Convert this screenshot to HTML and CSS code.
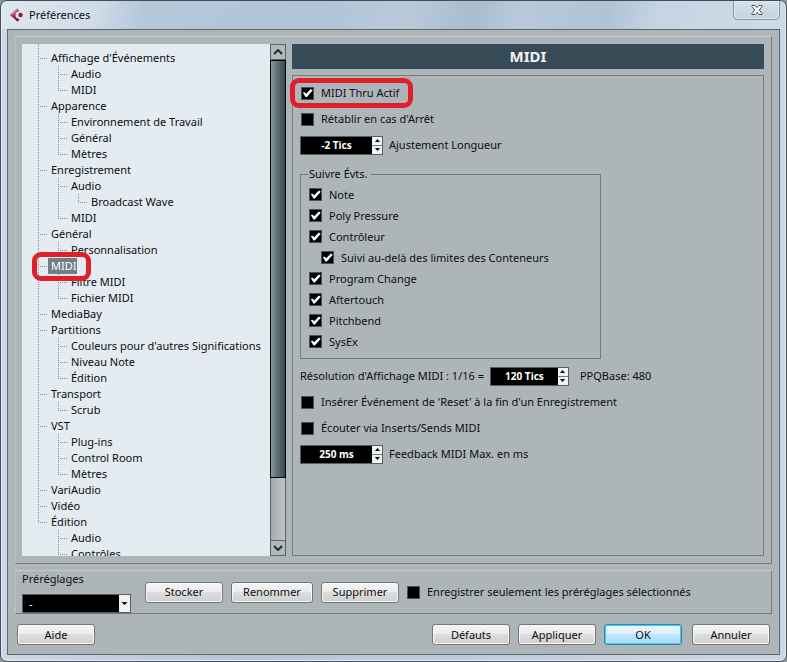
FILE: index.html
```html
<!DOCTYPE html>
<html lang="fr">
<head>
<meta charset="utf-8">
<title>Préférences</title>
<link rel="stylesheet" href="styles.css">
</head>
<body>
<div class="window">
  <header class="titlebar">
    <svg class="app-icon" viewBox="0 0 14 14" aria-hidden="true">
      <path d="M0 7 7 0.500 9.500 3C6 4 5.500 5.500 5.500 7S6 10 9.500 11.500L7.500 13.500Z" fill="#a03048"/>
      <path d="M0 7 7 0.500 8 1.500 3.500 6.500Z" fill="#c98a97"/>
      <path d="M3 8.500 9.500 11.500 7.500 13.500Z" fill="#7c1630"/>
      <circle cx="10.500" cy="7" r="2.200" fill="#8c1c36"/>
    </svg>
    <h1 class="title">Préférences</h1>
    <button class="close" type="button" aria-label="Fermer">
      <svg viewBox="0 0 12 10" aria-hidden="true"><path d="M1 .5h3.200L6 2.700 7.800.5H11v1L8.300 5 11 8.500v1H7.800L6 7.300 4.200 9.500H1v-1L3.700 5 1 1.500Z" fill="#fff" stroke="#4c5360"/></svg>
    </button>
  </header>

  <main class="client">
    <section class="panel prefs">
      <nav class="tree">
        <ul class="root">
          <li><span>Affichage d'Événements</span>
            <ul><li><span>Audio</span></li><li><span>MIDI</span></li></ul></li>
          <li><span>Apparence</span>
            <ul><li><span>Environnement de Travail</span></li><li><span>Général</span></li><li><span>Mètres</span></li></ul></li>
          <li><span>Enregistrement</span>
            <ul><li><span>Audio</span><ul><li><span>Broadcast Wave</span></li></ul></li><li><span>MIDI</span></li></ul></li>
          <li><span>Général</span>
            <ul><li><span>Personnalisation</span></li></ul></li>
          <li><span class="selected">MIDI</span>
            <ul><li><span>Filtre MIDI</span></li><li><span>Fichier MIDI</span></li></ul></li>
          <li><span>MediaBay</span></li>
          <li><span>Partitions</span>
            <ul><li><span>Couleurs pour d'autres Significations</span></li><li><span>Niveau Note</span></li><li><span>Édition</span></li></ul></li>
          <li><span>Transport</span>
            <ul><li><span>Scrub</span></li></ul></li>
          <li><span>VST</span>
            <ul><li><span>Plug-ins</span></li><li><span>Control Room</span></li><li><span>Mètres</span></li></ul></li>
          <li><span>VariAudio</span></li>
          <li><span>Vidéo</span></li>
          <li><span>Édition</span>
            <ul><li><span>Audio</span></li><li><span>Contrôles</span></li></ul></li>
        </ul>
      </nav>

      <div class="scrollbar">
        <button type="button" aria-label="Défiler vers le haut"><svg viewBox="0 0 10 6" aria-hidden="true"><path d="M1 5 5 1l4 4"/></svg></button>
        <div class="track"><div class="thumb"></div></div>
        <button type="button" aria-label="Défiler vers le bas"><svg viewBox="0 0 10 6" aria-hidden="true"><path d="M1 1l4 4 4-4"/></svg></button>
      </div>

      <div class="page">
        <h2>MIDI</h2>
        <form class="options">
          <div class="row"><label class="check ringed"><input type="checkbox" checked>MIDI Thru Actif</label></div>
          <div class="row"><label class="check"><input type="checkbox">Rétablir en cas d'Arrêt</label></div>
          <div class="row">
            <div class="spin">
              <input id="length" type="text" value="-2 Tics">
              <button type="button" aria-label="Augmenter"><svg viewBox="0 0 5 3" aria-hidden="true"><path d="M0 3 2.500 0 5 3Z"/></svg></button>
              <button type="button" aria-label="Diminuer"><svg viewBox="0 0 5 3" aria-hidden="true"><path d="M0 0h5L2.500 3Z"/></svg></button>
            </div>
            <label for="length">Ajustement Longueur</label>
          </div>

          <fieldset>
            <legend>Suivre Évts.</legend>
            <label class="check"><input type="checkbox" checked>Note</label>
            <label class="check"><input type="checkbox" checked>Poly Pressure</label>
            <label class="check"><input type="checkbox" checked>Contrôleur</label>
            <label class="check nested"><input type="checkbox" checked>Suivi au-delà des limites des Conteneurs</label>
            <label class="check"><input type="checkbox" checked>Program Change</label>
            <label class="check"><input type="checkbox" checked>Aftertouch</label>
            <label class="check"><input type="checkbox" checked>Pitchbend</label>
            <label class="check"><input type="checkbox" checked>SysEx</label>
          </fieldset>

          <div class="row">
            <label for="resolution">Résolution d'Affichage MIDI : 1/16 =</label>
            <div class="spin narrow">
              <input id="resolution" type="text" value="120 Tics">
              <button type="button" aria-label="Augmenter"><svg viewBox="0 0 5 3" aria-hidden="true"><path d="M0 3 2.500 0 5 3Z"/></svg></button>
              <button type="button" aria-label="Diminuer"><svg viewBox="0 0 5 3" aria-hidden="true"><path d="M0 0h5L2.500 3Z"/></svg></button>
            </div>
            <span class="base">PPQBase: 480</span>
          </div>
          <div class="row"><label class="check"><input type="checkbox">Insérer Événement de 'Reset' à la fin d'un Enregistrement</label></div>
          <div class="row"><label class="check"><input type="checkbox">Écouter via Inserts/Sends MIDI</label></div>
          <div class="row">
            <div class="spin">
              <input id="feedback" type="text" value="250 ms">
              <button type="button" aria-label="Augmenter"><svg viewBox="0 0 5 3" aria-hidden="true"><path d="M0 3 2.500 0 5 3Z"/></svg></button>
              <button type="button" aria-label="Diminuer"><svg viewBox="0 0 5 3" aria-hidden="true"><path d="M0 0h5L2.500 3Z"/></svg></button>
            </div>
            <label for="feedback">Feedback MIDI Max. en ms</label>
          </div>
        </form>
      </div>
    </section>

    <section class="panel presets">
      <div class="preset">
        <label for="preset">Préréglages</label>
        <div class="combo">
          <select id="preset"><option>-</option></select>
          <svg viewBox="0 0 11 17" aria-hidden="true"><path d="M0 0h11v17H0Z" fill="#f1f2f2"/><path d="M2.500 7h6l-3 3Z"/></svg>
        </div>
      </div>
      <div class="actions">
        <button class="btn" type="button">Stocker</button>
        <button class="btn wide" type="button">Renommer</button>
        <button class="btn" type="button">Supprimer</button>
        <label class="check"><input type="checkbox">Enregistrer seulement les préréglages sélectionnés</label>
      </div>
    </section>

    <footer class="buttons">
      <button class="btn help" type="button">Aide</button>
      <button class="btn" type="button">Défauts</button>
      <button class="btn" type="button">Appliquer</button>
      <button class="btn default" type="button">OK</button>
      <button class="btn" type="button">Annuler</button>
    </footer>
  </main>
</div>
</body>
</html>
```
FILE: styles.css
```css
* { box-sizing: border-box; }

body {
  margin: 0;
  background: #8d969c;
  color: #0c0e10;
  font: 11px/16px "Noto Sans", "Open Sans", sans-serif;
}

button, input, select { margin: 0; padding: 0; font: inherit; color: inherit; }
ul { margin: 0; padding: 0; list-style: none; }

.window {
  display: flex;
  flex-direction: column;
  height: 100vh;
  padding: 0 6px 6px;
  border: 1px solid #454d56;
  border-radius: 7px;
  background: linear-gradient(90deg, #cbd8e6, #b3c6da 30%, #bccddd 60%, #c9d8e6);
  box-shadow: inset 0 0 0 1px #e4edf5;
}

/* Title bar */
.titlebar {
  display: flex;
  flex: none;
  align-items: center;
  height: 28px;
  margin: 0 -5px;
  padding: 0 5px 0 8px;
  background: linear-gradient(100deg, #dce6ef 0, #d0dce8 12%, #b5c8da 18%, #b0c4d8 40%, #b9cad9 52%, #a9bdce 60%, #b8cad9 66%, #b0c3d4 77%, #c5d5e3 84%, #cedbe7);
  border-radius: 6px 6px 0 0;
}
.app-icon { width: 14px; height: 14px; margin-right: 5px; }
.title { margin: 0; font-size: 11px; font-weight: normal; }
.close {
  align-self: flex-start;
  width: 47px;
  height: 19px;
  margin-left: auto;
  border: 1px solid #8494a5;
  border-top: 0;
  border-radius: 0 0 5px 5px;
  background: linear-gradient(#d6e1ec, #c3d2e0);
  box-shadow: inset 0 0 0 1px #dfe9f1;
}
.close svg { display: block; width: 12px; height: 10px; margin: 0 auto; }

/* Client area */
.client {
  display: flex;
  flex: 1;
  flex-direction: column;
  min-height: 0;
  padding: 6px 7px;
  border: 1px solid #5d676f;
  background: #aeb5b8;
}
.panel {
  border: 1px solid;
  border-color: #c6ccce #747a7f #747a7f #bcc3c5;
}
.prefs {
  display: flex;
  flex: 1;
  min-height: 0;
  padding: 7px 7px 7px 6px;
}

/* Tree */
.tree {
  flex: 0 1 248px;
  overflow: hidden;
  padding-left: 16px;
  background: #e4ebf1;
  white-space: nowrap;
}
.tree li {
  padding-left: 10px;
  background:
    repeating-linear-gradient(#868c93 0 1px, transparent 1px 2px) 0 0 / 1px 100% no-repeat,
    repeating-linear-gradient(90deg, #868c93 0 1px, transparent 1px 2px) 0 8px / 9px 1px no-repeat;
}
.tree li:last-child { background-size: 1px 8px, 9px 1px; }
.tree .root > li:first-child { padding-top: 6px; background-position: 0 0, 0 14px; }
.tree li ul { margin-left: 10px; }
.tree span { display: block; width: max-content; padding: 0 1px 0 3px; }
.tree .selected { position: relative; background: #6e7f87; color: #fff; }

/* Highlight rings */
.selected::after, .ringed::after {
  content: "";
  position: absolute;
  z-index: 1;
  border: 5px solid #df1f2a;
  border-radius: 9px;
  pointer-events: none;
}
.selected::after { inset: -6px -14px -7px -16px; }
.ringed::after { inset: -7px -14px -7px -10px; }

/* Scrollbar */
.scrollbar {
  display: grid;
  flex: 0 0 16px;
  grid-template-rows: 16px 1fr 16px;
  margin-right: 6px;
}
.scrollbar button {
  display: grid;
  place-items: center;
  border: 1px solid #5b646a;
  background: #b2b9bc;
}
.scrollbar svg { width: 10px; height: 6px; fill: none; stroke: #222a30; stroke-width: 2; }
.track {
  border: solid #5b646a;
  border-width: 0 1px;
  background: linear-gradient(90deg, #a4abae, #c0c6c8);
}
.thumb {
  height: 87%;
  margin: 0 -1px;
  border: 1px solid #000;
  background: linear-gradient(90deg, #8b999f, #60727a 40%, #3b4b54);
}

/* Settings page */
.page { display: flex; flex: 1; flex-direction: column; min-width: 0; gap: 6px; }
.page h2 {
  margin: 0;
  background: #384c57;
  color: #f2f4f5;
  font-size: 15px;
  font-weight: bold;
  line-height: 25px;
  text-align: center;
}
.options {
  flex: 1;
  min-height: 0;
  padding: 4px 7px;
  border: 1px solid #747a7f;
  white-space: nowrap;
}
.row { display: flex; align-items: center; height: 26px; gap: 6px; }
.check { display: flex; position: relative; align-items: center; gap: 7px; }
.check input {
  flex: none;
  width: 13px;
  height: 13px;
  margin-left: 1px;
  appearance: none;
  border: 1px solid #4b5256;
  background: #000;
}
.check input:checked::before {
  content: "";
  display: block;
  width: 11px;
  height: 11px;
  background: #fff;
  clip-path: polygon(7% 46%, 25% 44%, 38% 56%, 80% 14%, 98% 24%, 44% 86%, 32% 86%);
}
fieldset {
  width: 66%;
  min-width: max-content;
  margin: 8px 0 4px;
  padding: 2px 7px 6px;
  border: 1px solid #747a7f;
}
legend { padding: 0 3px 0 1px; }
fieldset .check { height: 21px; }
fieldset .nested { margin-left: 12px; }

.spin {
  display: grid;
  grid-template: 1fr 1fr / 1fr 10px;
  width: 83px;
  height: 19px;
  border: 1px solid #596065;
  background: #000;
}
.spin input {
  grid-row: 1 / 3;
  width: 100%;
  min-width: 0;
  border: 0;
  background: #000;
  color: #fff;
  font-size: 10px;
  font-weight: bold;
  text-align: center;
}
.spin button { display: grid; place-items: center; border: 0; background: #f1f2f2; }
.spin button + button { border-top: 1px solid #747a7f; }
.spin svg { width: 5px; height: 3px; }
.spin.narrow { width: 79px; }
.base { margin-left: 5px; }

/* Presets */
.presets { display: flex; margin-top: 6px; padding: 0 6px; gap: 14px; }
.combo { position: relative; width: 109px; height: 19px; margin-top: 7px; }
.combo select {
  display: block;
  width: 100%;
  height: 100%;
  padding-left: 6px;
  appearance: none;
  border: 1px solid #596065;
  border-radius: 0;
  background: #000;
  color: #fff;
}
.combo svg { position: absolute; top: 1px; right: 1px; width: 11px; height: 17px; pointer-events: none; }
.actions { display: flex; align-items: center; gap: 8px; white-space: nowrap; }
.actions .check input { margin-left: 0; }

.btn {
  flex: none;
  width: 78px;
  height: 21px;
  border: 1px solid #70767a;
  border-radius: 3px;
  background: linear-gradient(#f4f4f4, #ebebeb 50%, #dddddd 50%, #d0d0d0);
  box-shadow: inset 0 0 0 1px #f8f8f8;
  line-height: 18px;
}
.btn.wide { width: 82px; }
.btn.default {
  margin-right: 2px;
  border-color: #2f86b5;
  background: linear-gradient(#eaf6fd, #d9f0fc 50%, #bee6fd 50%, #b0dcf4);
  box-shadow: inset 0 0 0 1px #43c6f0;
}
.buttons { display: flex; padding: 10px 2px 3px; gap: 8px; }
.help { margin-right: auto; }
```
